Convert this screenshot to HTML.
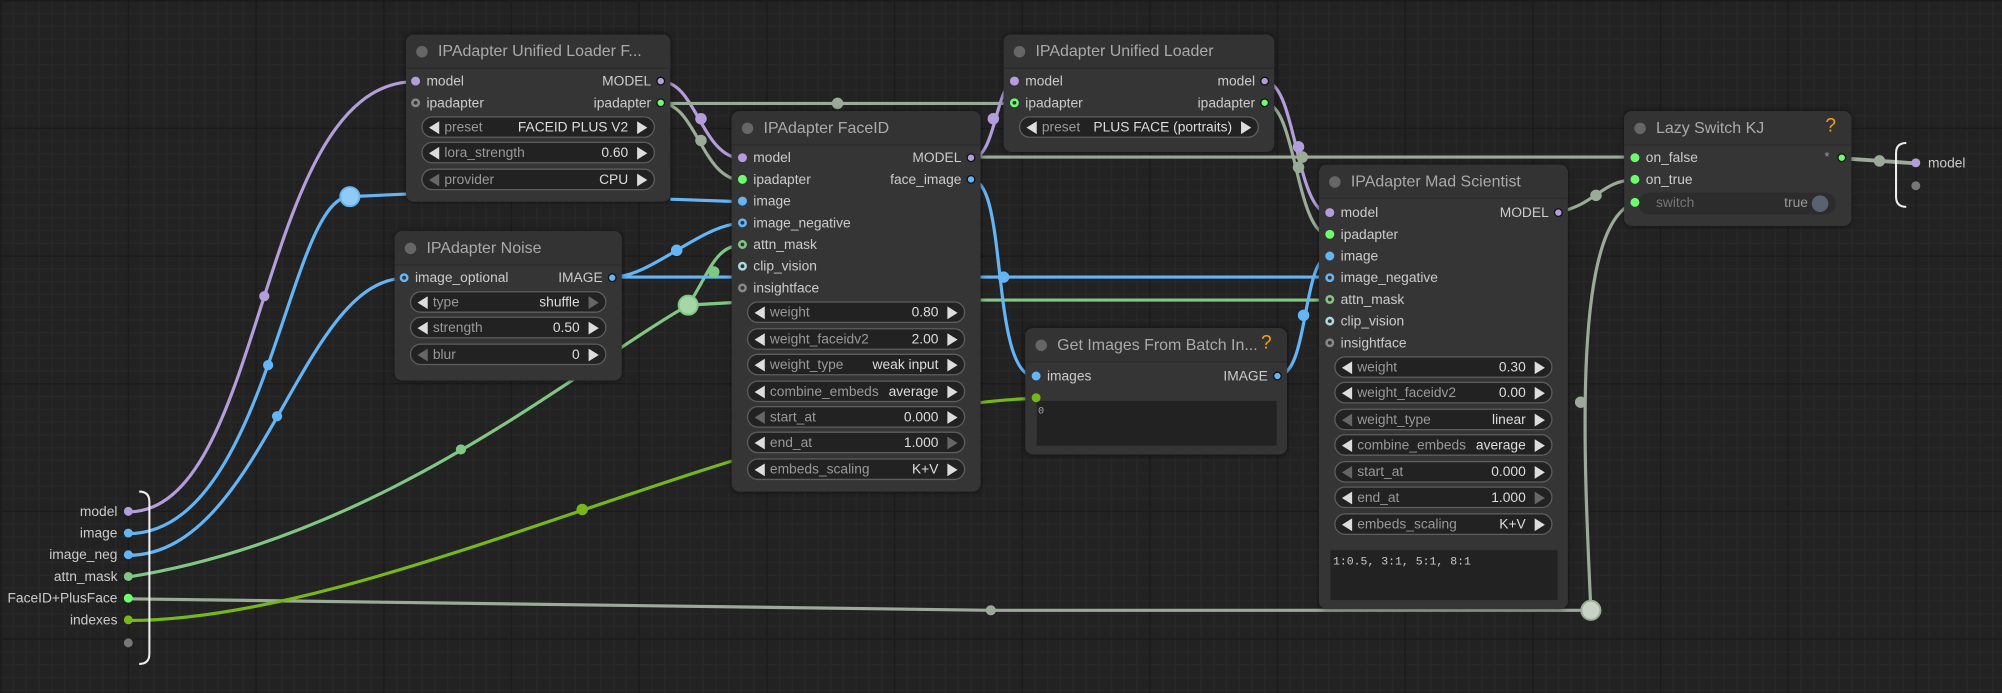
<!DOCTYPE html>
<html><head><meta charset="utf-8"><style>
html,body{margin:0;padding:0;width:2002px;height:693px;overflow:hidden;background:#222;}
#c{position:absolute;left:0;top:0;width:1568px;height:543px;transform:scale(1.27679);transform-origin:0 0;
background-color:#222;
background-image:linear-gradient(#1b1b1b 1px,transparent 1px),linear-gradient(90deg,#1b1b1b 1px,transparent 1px),linear-gradient(#272727 1px,transparent 1px),linear-gradient(90deg,#272727 1px,transparent 1px);
background-size:100px 100px,100px 100px,10px 10px,10px 10px;
font-family:"Liberation Sans",sans-serif;}
svg{position:absolute;left:0;top:0}
.n{position:absolute;background:#353535;border-radius:6px;box-shadow:0 0 4px rgba(0,0,0,.5)}
.n .tb{position:absolute;left:0;top:0;right:0;height:26px;background:#333;border-radius:6px 6px 0 0;border-bottom:1px solid #2c2c2c}
.n .tt{position:absolute;left:25px;top:6px;font-size:12.5px;color:#aaa;white-space:nowrap}
.n .td{position:absolute;left:8px;top:9px;width:9px;height:9px;border-radius:50%;background:#666}
.n .q{position:absolute;right:12px;top:3px;color:#f0a020;font-size:15px}
.l{position:absolute;font-size:10.8px;color:#ccc;line-height:14px;white-space:nowrap}
.r{text-align:right}
.d{position:absolute;width:7px;height:7px;border-radius:50%;box-sizing:border-box}
.h{border:2px solid;background:#353535}
.w{position:absolute;height:17px;box-sizing:border-box;border:1px solid #5e5e5e;border-radius:9px;background:#222;font-size:10.8px;line-height:16px}
.w .a{position:absolute;left:5px;top:3px;width:0;height:0;border-top:5px solid transparent;border-bottom:5px solid transparent;border-right:8px solid #ddd}
.w .b{position:absolute;right:5px;top:3px;width:0;height:0;border-top:5px solid transparent;border-bottom:5px solid transparent;border-left:8px solid #ddd}
.w .k{position:absolute;left:17px;color:#999;white-space:nowrap}
.w .v{position:absolute;right:20px;color:#ddd;white-space:nowrap}
.dim{border-right-color:#666!important;border-left-color:#666!important}
</style></head><body><div id="c">
<svg width="1568" height="543" fill="none" stroke-width="2.5">
<path d="M100,401 C210,401 200,64 325,64" stroke="#b39ddb"/>
<path d="M100,418 C210,418 225,154 274,154 L318,152" stroke="#64b5f6"/>
<path d="M525,156 L581,158" stroke="#64b5f6"/>
<path d="M100,435 C205,435 235,218 317,218" stroke="#64b5f6"/>
<path d="M100,452 C300,420 450,290 539,239" stroke="#81c784"/>
<path d="M539,239 C555,215 560,192 581,192" stroke="#81c784"/>
<path d="M539,239 L573,237 M768,235 L1041,235" stroke="#81c784"/>
<path d="M100,469 L776,478 L1246,478" stroke="#9aab98"/>
<path d="M1246,478 C1240,350 1232,175 1280,159" stroke="#9aab98"/>
<path d="M100,486 C300,486 600,318 811,312" stroke="#77b819"/>
<path d="M518,64 C545,64 550,124 581,124" stroke="#b39ddb"/>
<path d="M518,81 C545,81 550,141 581,141" stroke="#9aab98"/>
<path d="M518,81 L795,81" stroke="#9aab98"/>
<path d="M761,124 C780,124 780,64 795,64" stroke="#b39ddb"/>
<path d="M991,64 C1015,64 1015,167 1041,167" stroke="#b39ddb"/>
<path d="M991,81 C1015,81 1015,184 1041,184" stroke="#9aab98"/>
<path d="M768,123 L1280,123" stroke="#9aab98"/>
<path d="M480,217 C510,217 550,175 581,175" stroke="#64b5f6"/>
<path d="M480,217 L1041,217" stroke="#64b5f6"/>
<path d="M761,141 C790,141 775,295 811,295" stroke="#64b5f6"/>
<path d="M1001,294 C1025,294 1020,201 1041,201" stroke="#64b5f6"/>
<path d="M1221,166 C1250,160 1255,141 1280,141" stroke="#9aab98"/>
<path d="M1443,124 L1501,128" stroke="#9aab98" stroke-width="3"/>
<g stroke="none">
<circle cx="207" cy="232" r="4" fill="#b39ddb"/>
<circle cx="210" cy="286" r="4" fill="#64b5f6"/>
<circle cx="217" cy="326" r="4" fill="#64b5f6"/>
<circle cx="361" cy="352" r="4" fill="#81c784"/>
<circle cx="456" cy="399" r="4.5" fill="#77b819"/>
<circle cx="776" cy="478" r="4" fill="#9aab98"/>
<circle cx="549" cy="93" r="4.5" fill="#b39ddb"/>
<circle cx="549" cy="110" r="4.5" fill="#9aab98"/>
<circle cx="656" cy="81" r="4.5" fill="#9aab98"/>
<circle cx="778" cy="93" r="4.5" fill="#b39ddb"/>
<circle cx="1017" cy="115" r="4.5" fill="#b39ddb"/>
<circle cx="1017" cy="131" r="4.5" fill="#9aab98"/>
<circle cx="1020" cy="123" r="4.5" fill="#9aab98"/>
<circle cx="530" cy="196" r="4.5" fill="#64b5f6"/>
<circle cx="786" cy="217" r="4.5" fill="#64b5f6"/>
<circle cx="1021" cy="247" r="4.5" fill="#64b5f6"/>
<circle cx="559" cy="213" r="4.5" fill="#81c784"/>
<circle cx="1250" cy="153" r="4.5" fill="#9aab98"/>
<circle cx="1238" cy="315" r="4.5" fill="#9aab98"/>
<circle cx="1472" cy="126" r="4.5" fill="#9aab98"/>
</g>
<circle cx="274" cy="154" r="7.5" fill="#90caf9" stroke="#64b5f6" stroke-width="1.5"/>
<circle cx="539" cy="239" r="7.5" fill="#a5d6a7" stroke="#81c784" stroke-width="1.5"/>
<circle cx="1246" cy="478" r="7.5" fill="#c8d2c6" stroke="#9aab98" stroke-width="1.5"/>
<path d="M109,385 Q117,385 117,393 L117,512 Q117,520 109,520" stroke="#eee" stroke-width="1.6"/>
<path d="M1493,112 Q1485,112 1485,120 L1485,154 Q1485,162 1493,162" stroke="#eee" stroke-width="1.6"/>
</svg>

<div class="l r" style="left:0;width:92px;top:394px">model</div>
<div class="l r" style="left:0;width:92px;top:411px">image</div>
<div class="l r" style="left:0;width:92px;top:428px">image_neg</div>
<div class="l r" style="left:0;width:92px;top:445px">attn_mask</div>
<div class="l r" style="left:0;width:92px;top:462px">FaceID+PlusFace</div>
<div class="l r" style="left:0;width:92px;top:479px">indexes</div>
<div class="d" style="left:97px;top:397px;background:#b39ddb"></div>
<div class="d" style="left:97px;top:414px;background:#64b5f6"></div>
<div class="d" style="left:97px;top:431px;background:#64b5f6"></div>
<div class="d" style="left:97px;top:448px;background:#81c784"></div>
<div class="d" style="left:97px;top:465px;background:#6dfc6d"></div>
<div class="d" style="left:97px;top:482px;background:#77b819"></div>
<div class="d" style="left:97px;top:500px;background:#777"></div>
<div class="l" style="left:1510px;top:121px">model</div>
<div class="d" style="left:1497px;top:124px;background:#b39ddb"></div>
<div class="d" style="left:1497px;top:142px;background:#777"></div>

<div class="n" style="left:318px;top:27px;width:207px;height:131px"><div class="tb"></div><div class="td"></div><div class="tt">IPAdapter Unified Loader F...</div></div>
<div class="d" style="left:322px;top:60px;background:#b39ddb"></div><div class="l" style="left:334px;top:57px">model</div>
<div class="d h" style="left:322px;top:77px;border-color:#888"></div><div class="l" style="left:334px;top:74px">ipadapter</div>
<div class="l r" style="left:400px;width:110px;top:57px">MODEL</div><div class="d" style="left:514px;top:60px;background:#b39ddb;border:1px solid #111"></div>
<div class="l r" style="left:400px;width:110px;top:74px">ipadapter</div><div class="d" style="left:514px;top:77px;background:#6dfc6d;border:1px solid #111"></div>
<div class="w" style="left:330px;top:91px;width:183px"><div class="a"></div><span class="k">preset</span><span class="v">FACEID PLUS V2</span><div class="b"></div></div>
<div class="w" style="left:330px;top:111px;width:183px"><div class="a"></div><span class="k">lora_strength</span><span class="v">0.60</span><div class="b"></div></div>
<div class="w" style="left:330px;top:132px;width:183px"><div class="a dim"></div><span class="k">provider</span><span class="v">CPU</span><div class="b"></div></div>

<div class="n" style="left:309px;top:181px;width:178px;height:117px"><div class="tb"></div><div class="td"></div><div class="tt">IPAdapter Noise</div></div>
<div class="d h" style="left:313px;top:214px;border-color:#64b5f6"></div><div class="l" style="left:325px;top:211px">image_optional</div>
<div class="l r" style="left:380px;width:92px;top:211px">IMAGE</div><div class="d" style="left:476px;top:214px;background:#64b5f6;border:1px solid #111"></div>
<div class="w" style="left:321px;top:228px;width:154px"><div class="a"></div><span class="k">type</span><span class="v">shuffle</span><div class="b dim"></div></div>
<div class="w" style="left:321px;top:248px;width:154px"><div class="a"></div><span class="k">strength</span><span class="v">0.50</span><div class="b"></div></div>
<div class="w" style="left:321px;top:269px;width:154px"><div class="a dim"></div><span class="k">blur</span><span class="v">0</span><div class="b"></div></div>

<div class="n" style="left:573px;top:87px;width:195px;height:298px"><div class="tb"></div><div class="td"></div><div class="tt">IPAdapter FaceID</div></div>
<div class="d" style="left:578px;top:120px;background:#b39ddb"></div><div class="l" style="left:590px;top:117px">model</div>
<div class="d" style="left:578px;top:137px;background:#6dfc6d"></div><div class="l" style="left:590px;top:134px">ipadapter</div>
<div class="d" style="left:578px;top:154px;background:#64b5f6"></div><div class="l" style="left:590px;top:151px">image</div>
<div class="d h" style="left:578px;top:171px;border-color:#64b5f6"></div><div class="l" style="left:590px;top:168px">image_negative</div>
<div class="d h" style="left:578px;top:188px;border-color:#81c784"></div><div class="l" style="left:590px;top:185px">attn_mask</div>
<div class="d h" style="left:578px;top:205px;border-color:#a8dadc"></div><div class="l" style="left:590px;top:202px">clip_vision</div>
<div class="d h" style="left:578px;top:222px;border-color:#888"></div><div class="l" style="left:590px;top:219px">insightface</div>
<div class="l r" style="left:650px;width:103px;top:117px">MODEL</div><div class="d" style="left:757px;top:120px;background:#b39ddb;border:1px solid #111"></div>
<div class="l r" style="left:650px;width:103px;top:134px">face_image</div><div class="d" style="left:757px;top:137px;background:#64b5f6;border:1px solid #111"></div>
<div class="w" style="left:585px;top:236px;width:171px"><div class="a"></div><span class="k">weight</span><span class="v">0.80</span><div class="b"></div></div>
<div class="w" style="left:585px;top:257px;width:171px"><div class="a"></div><span class="k">weight_faceidv2</span><span class="v">2.00</span><div class="b"></div></div>
<div class="w" style="left:585px;top:277px;width:171px"><div class="a"></div><span class="k">weight_type</span><span class="v">weak input</span><div class="b"></div></div>
<div class="w" style="left:585px;top:298px;width:171px"><div class="a"></div><span class="k">combine_embeds</span><span class="v">average</span><div class="b"></div></div>
<div class="w" style="left:585px;top:318px;width:171px"><div class="a dim"></div><span class="k">start_at</span><span class="v">0.000</span><div class="b"></div></div>
<div class="w" style="left:585px;top:338px;width:171px"><div class="a"></div><span class="k">end_at</span><span class="v">1.000</span><div class="b dim"></div></div>
<div class="w" style="left:585px;top:359px;width:171px"><div class="a"></div><span class="k">embeds_scaling</span><span class="v">K+V</span><div class="b"></div></div>

<div class="n" style="left:786px;top:27px;width:212px;height:92px"><div class="tb"></div><div class="td"></div><div class="tt">IPAdapter Unified Loader</div></div>
<div class="d" style="left:791px;top:60px;background:#b39ddb"></div><div class="l" style="left:803px;top:57px">model</div>
<div class="d h" style="left:791px;top:77px;border-color:#6dfc6d"></div><div class="l" style="left:803px;top:74px">ipadapter</div>
<div class="l r" style="left:870px;width:113px;top:57px">model</div><div class="d" style="left:987px;top:60px;background:#b39ddb;border:1px solid #111"></div>
<div class="l r" style="left:870px;width:113px;top:74px">ipadapter</div><div class="d" style="left:987px;top:77px;background:#6dfc6d;border:1px solid #111"></div>
<div class="w" style="left:798px;top:91px;width:188px"><div class="a"></div><span class="k">preset</span><span class="v">PLUS FACE (portraits)</span><div class="b"></div></div>

<div class="n" style="left:803px;top:257px;width:205px;height:99px"><div class="tb"></div><div class="td"></div><div class="tt">Get Images From Batch In...</div><div class="q">?</div></div>
<div class="d" style="left:808px;top:291px;background:#64b5f6"></div><div class="l" style="left:820px;top:288px">images</div>
<div class="l r" style="left:900px;width:93px;top:288px">IMAGE</div><div class="d" style="left:997px;top:291px;background:#64b5f6;border:1px solid #111"></div>
<div style="position:absolute;left:812px;top:314px;width:188px;height:35px;background:#222"></div>
<div class="d" style="left:808px;top:308px;background:#77b819"></div>
<div class="l" style="left:813px;top:316px;font-size:8px;color:#aaa;font-family:'Liberation Mono',monospace">0</div>

<div class="n" style="left:1033px;top:129px;width:195px;height:348px"><div class="tb"></div><div class="td"></div><div class="tt">IPAdapter Mad Scientist</div></div>
<div class="d" style="left:1038px;top:163px;background:#b39ddb"></div><div class="l" style="left:1050px;top:160px">model</div>
<div class="d" style="left:1038px;top:180px;background:#6dfc6d"></div><div class="l" style="left:1050px;top:177px">ipadapter</div>
<div class="d" style="left:1038px;top:197px;background:#64b5f6"></div><div class="l" style="left:1050px;top:194px">image</div>
<div class="d h" style="left:1038px;top:214px;border-color:#64b5f6"></div><div class="l" style="left:1050px;top:211px">image_negative</div>
<div class="d h" style="left:1038px;top:231px;border-color:#81c784"></div><div class="l" style="left:1050px;top:228px">attn_mask</div>
<div class="d h" style="left:1038px;top:248px;border-color:#a8dadc"></div><div class="l" style="left:1050px;top:245px">clip_vision</div>
<div class="d h" style="left:1038px;top:265px;border-color:#888"></div><div class="l" style="left:1050px;top:262px">insightface</div>
<div class="l r" style="left:1110px;width:103px;top:160px">MODEL</div><div class="d" style="left:1217px;top:163px;background:#b39ddb;border:1px solid #111"></div>
<div class="w" style="left:1045px;top:279px;width:171px"><div class="a"></div><span class="k">weight</span><span class="v">0.30</span><div class="b"></div></div>
<div class="w" style="left:1045px;top:299px;width:171px"><div class="a"></div><span class="k">weight_faceidv2</span><span class="v">0.00</span><div class="b"></div></div>
<div class="w" style="left:1045px;top:320px;width:171px"><div class="a dim"></div><span class="k">weight_type</span><span class="v">linear</span><div class="b"></div></div>
<div class="w" style="left:1045px;top:340px;width:171px"><div class="a"></div><span class="k">combine_embeds</span><span class="v">average</span><div class="b"></div></div>
<div class="w" style="left:1045px;top:361px;width:171px"><div class="a dim"></div><span class="k">start_at</span><span class="v">0.000</span><div class="b"></div></div>
<div class="w" style="left:1045px;top:381px;width:171px"><div class="a"></div><span class="k">end_at</span><span class="v">1.000</span><div class="b dim"></div></div>
<div class="w" style="left:1045px;top:402px;width:171px"><div class="a"></div><span class="k">embeds_scaling</span><span class="v">K+V</span><div class="b"></div></div>
<div style="position:absolute;left:1042px;top:431px;width:178px;height:39px;background:#222"></div>
<div class="l" style="left:1044px;top:433px;font-size:9px;color:#ccc;font-family:'Liberation Mono',monospace">1:0.5, 3:1, 5:1, 8:1</div>

<div class="n" style="left:1272px;top:87px;width:178px;height:90px"><div class="tb"></div><div class="td"></div><div class="tt">Lazy Switch KJ</div><div class="q">?</div></div>
<div class="d" style="left:1277px;top:120px;background:#6dfc6d"></div><div class="l" style="left:1289px;top:117px">on_false</div>
<div class="d" style="left:1277px;top:137px;background:#6dfc6d"></div><div class="l" style="left:1289px;top:134px">on_true</div>
<div style="position:absolute;left:1283px;top:151px;width:155px;height:17px;border-radius:9px;background:#2c2c2c"></div>
<div class="d" style="left:1277px;top:155px;background:#6dfc6d"></div>
<div class="l" style="left:1297px;top:152px;color:#777">switch</div>
<div class="l r" style="left:1380px;width:36px;top:152px;color:#999">true</div>
<div style="position:absolute;left:1419px;top:153px;width:13px;height:13px;border-radius:50%;background:#5a6270"></div>
<div class="l" style="left:1429px;top:117px;color:#999;font-size:10px">*</div>
<div class="d" style="left:1439px;top:120px;background:#6dfc6d;border:1px solid #111"></div>
</div></body></html>
